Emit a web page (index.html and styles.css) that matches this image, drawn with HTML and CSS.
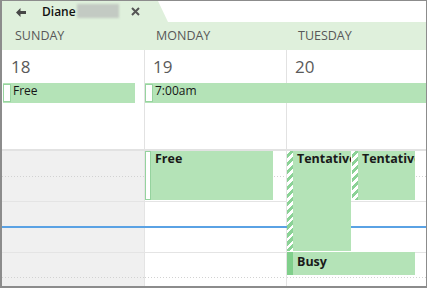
FILE: index.html
```html
<!DOCTYPE html>
<html>
<head>
<meta charset="utf-8">
<link rel="stylesheet" href="styles.css">
</head>
<body>
<div class="frame">
  <div class="tabbar">
    <div class="tab">
      <svg class="back" width="10" height="9" viewBox="0 0 10 9"><path d="M0 4.5 L4.5 0 V3 H10 V6 H4.5 V9 Z" fill="#474747"/></svg>
      <span class="name">Diane</span>
      <span class="blur"></span>
      <svg class="close" width="9" height="9" viewBox="0 0 9 9"><path d="M1 1 L8 8 M8 1 L1 8" stroke="#555" stroke-width="2"/></svg>
    </div>
  </div>
  <div class="dayhead">
    <div class="dayname sun">SUNDAY</div>
    <div class="dayname">MONDAY</div>
    <div class="dayname">TUESDAY</div>
  </div>
  <div class="allday">
    <div class="col c1"><span class="date sun">18</span></div>
    <div class="col c2"><span class="date">19</span></div>
    <div class="col c3"><span class="date">20</span></div>
    <div class="bar bar-sun"><span class="box"></span><span class="btext">Free</span></div>
    <div class="bar bar-mon"><span class="box"></span><span class="btext">7:00am</span></div>
  </div>
  <div class="timegrid">
    <div class="tcol t1"></div>
    <div class="tcol t2"></div>
    <div class="tcol t3"></div>
    <div class="now"></div>
    <div class="ev ev-free"><span class="strip s-free"></span><span class="label">Free</span></div>
    <div class="ev ev-tent1"><span class="strip s-tent"></span><span class="label">Tentative</span></div>
    <div class="ev ev-tent2"><span class="strip s-tent"></span><span class="label">Tentative</span></div>
    <div class="ev ev-busy"><span class="strip s-busy"></span><span class="label">Busy</span></div>
  </div>
</div>
</body>
</html>
```
FILE: styles.css
```css
* { box-sizing: border-box; }
html, body { margin: 0; padding: 0; background: #fff; }
body { font-family: "Open Sans", "Noto Sans", sans-serif; }

.frame {
  width: 427px;
  height: 288px;
  border: solid #8c8c8c;
  border-width: 1px 1px 2px 2px;
  display: flex;
  flex-direction: column;
  overflow: hidden;
}

/* tab */
.tabbar { height: 21px; flex: none; background: #fff; }
.tab {
  width: 166px;
  height: 21px;
  background: #dff0dc;
  clip-path: polygon(0 0, 156px 0, 166px 100%, 0 100%);
  display: flex;
  align-items: center;
}
.back { margin-left: 14px; margin-top: 1px; }
.name {
  margin-left: 16px;
  font-size: 12px;
  font-weight: 600;
  color: #111;
  line-height: 19px;
  margin-top: -1px;
}
.blur {
  width: 42px;
  height: 14px;
  margin-left: 1px;
  margin-top: -2px;
  background: #c3cac3;
  filter: blur(1px);
}
.close { margin-left: 12px; margin-top: -1px; }

/* day header */
.dayhead {
  height: 28px;
  flex: none;
  background: #dff0dc;
  display: grid;
  grid-template-columns: 143px 142px 1fr;
}
.dayname {
  font-size: 12.5px;
  line-height: 28px;
  color: #585858;
  padding-left: 11px;
}
.dayname.sun { padding-left: 13px; }

/* all-day area */
.allday {
  height: 101px;
  flex: none;
  border-bottom: 2px solid #e2e2e2;
  display: grid;
  grid-template-columns: 143px 142px 1fr;
  grid-template-rows: 33px 20px 1fr;
}
.col { grid-row: 1 / -1; }
.c1 { grid-column: 1; border-right: 1px solid #e2e2e2; }
.c2 { grid-column: 2; border-right: 1px solid #e2e2e2; }
.c3 { grid-column: 3; }
.date {
  display: block;
  font-size: 17px;
  line-height: 24px;
  padding-top: 5px;
  padding-left: 8px;
  color: #5a5a5a;
}
.date.sun { padding-left: 9px; }

.bar {
  grid-row: 2;
  background: #b4e3b7;
  display: flex;
  align-items: flex-start;
  overflow: hidden;
  white-space: nowrap;
}
.bar-sun { grid-column: 1; margin: 0 10px 0 1px; }
.bar-mon { grid-column: 2 / 4; }
.box {
  flex: none;
  width: 8px;
  height: 18px;
  margin-top: 1px;
  background: #fff;
  border: 1px solid #97d49f;
}
.btext {
  font-size: 12px;
  line-height: 16px;
  padding-left: 2px;
  font-weight: 500;
  color: #161616;
}

/* timed grid */
.timegrid {
  flex: 1;
  display: grid;
  grid-template-columns: 143px 142px 65px 1fr;
  grid-template-rows: 50px 51px 25px 1fr;
}
.tcol {
  grid-row: 1 / -1;
  background-color: #fff;
  background-image:
    linear-gradient(#e4e4e4, #e4e4e4),
    linear-gradient(#e4e4e4, #e4e4e4),
    linear-gradient(to right, #d2d2d2 1px, transparent 1px),
    linear-gradient(to right, #d2d2d2 1px, transparent 1px);
  background-size: 100% 1px, 100% 1px, 3px 1px, 3px 1px;
  background-position: 0 50px, 0 101px, 0 25px, 0 126px;
  background-repeat: no-repeat, no-repeat, repeat-x, repeat-x;
}
.t1 { grid-column: 1; background-color: #f0f0f0; border-right: 1px solid #e4e4e4; }
.t2 { grid-column: 2; border-right: 1px solid #e4e4e4; }
.t3 { grid-column: 3 / 5; }

.now {
  grid-column: 1 / -1;
  grid-row: 2;
  align-self: start;
  margin-top: 25px;
  height: 2px;
  background: #5aa2e4;
}

.ev {
  background: #b4e3b7;
  display: flex;
  overflow: hidden;
  white-space: nowrap;
}
.strip { flex: none; width: 6px; }
.s-free { background: #fff; border: 1px solid #95d39e; }
.s-tent {
  background: repeating-linear-gradient(135deg, #fff 0 2.6px, #8bd296 2.6px 5.6px);
}
.s-busy { background: #80cf8b; }
.label {
  font-size: 12.5px;
  line-height: 16px;
  font-weight: 700;
  color: #1a1a1a;
  padding-left: 4px;
}
.ev-free { grid-column: 2; grid-row: 1; margin: 0 14px 1px 0; }
.ev-tent1 { grid-column: 3; grid-row: 1 / 3; margin: 0 1px 1px 0; }
.ev-tent2 { grid-column: 4; grid-row: 1; margin: 0 11px 1px 0; }
.ev-busy { grid-column: 3 / 5; grid-row: 3; margin: 0 11px 2px 0; }
.ev-busy .label { padding-top: 2px; }
```
